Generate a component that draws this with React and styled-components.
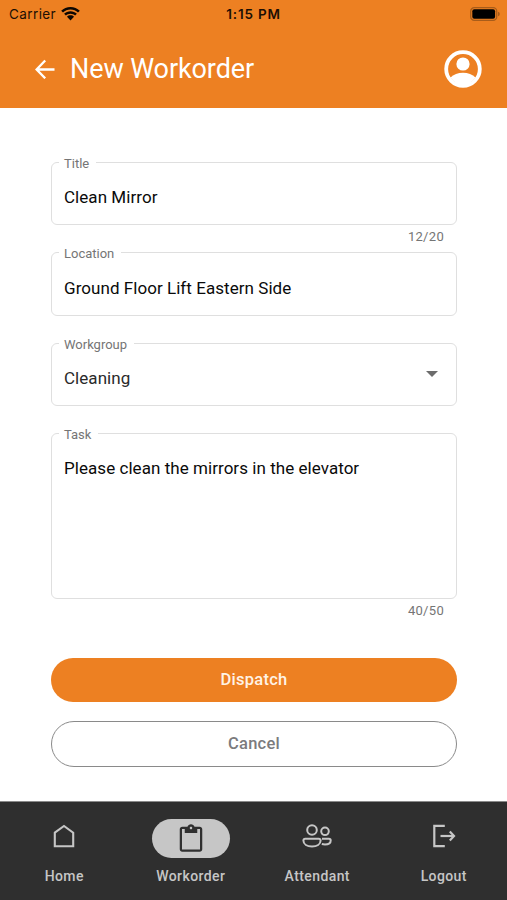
import React from 'react'
import styled, { createGlobalStyle } from 'styled-components'


const GlobalStyle = createGlobalStyle`
  * {
    box-sizing: border-box;
  }

  body {
    margin: 0;
    background: #fff;
    font-family: Roboto, "Liberation Sans", sans-serif;
  }
`

const Screen = styled.div`
  display: flex;
  flex-direction: column;
  width: 507px;
  height: 900px;
  overflow: hidden;
  background: #fff;
`

const Header = styled.header`
  height: 108px;
  background: #ed8022;
`

const StatusBar = styled.div`
  display: grid;
  grid-template-columns: 1fr auto 1fr;
  align-items: center;
  height: 28px;
  padding: 0 7px 0 9px;
  color: #1c0f04;
  font-family: Inter, sans-serif;
  font-size: 13.5px;
`

const Carrier = styled.div`
  display: flex;
  align-items: center;
  gap: 5px;
  letter-spacing: 0.4px;
`

const Time = styled.div`
  margin-right: 2px;
  font-size: 13.5px;
  font-weight: 600;
  letter-spacing: 0.8px;
`

const Battery = styled.div`
  display: flex;
  justify-content: flex-end;
  padding-bottom: 1px;
`

const AppBar = styled.div`
  display: flex;
  align-items: center;
  height: 80px;
  padding: 2px 25px 0 35px;
`

const PageTitle = styled.h1`
  flex: 1;
  margin: 0 0 0 14px;
  color: #fff;
  font-size: 27px;
  font-weight: 400;
  line-height: 32px;
  letter-spacing: -0.1px;
`

const IconButton = styled.button`
  display: flex;
  padding: 0;
  border: 0;
  background: none;
  color: #fff;
  cursor: pointer;
`

const Form = styled.form`
  flex: 1;
  display: flex;
  flex-direction: column;
  padding: 54px 50px 0 51px;
`

const Field = styled.div`
  position: relative;
  display: flex;
  justify-content: space-between;
  height: ${props => props.$height || 63}px;
  margin-bottom: ${props => props.$gap || 0}px;
  padding: ${props => props.$top || 22}px 18px 0 12px;
  border: 1px solid #dfdfdf;
  border-radius: 6px;
`

const Label = styled.label`
  position: absolute;
  top: -7px;
  left: 7px;
  padding: 0 7px 0 5px;
  background: #fff;
  color: #757575;
  font-size: 13px;
  line-height: 16px;
`

const Value = styled.div`
  color: ${props => props.$color || '#0a0a0a'};
  font-size: 17px;
  line-height: 24px;
  letter-spacing: 0.05px;
`

const Counter = styled.div`
  height: ${props => props.$height}px;
  padding: 4px 13px 0 0;
  color: #757575;
  font-size: 13px;
  line-height: 16px;
  letter-spacing: 0.3px;
  text-align: right;
`

const Button = styled.button`
  flex: none;
  height: ${props => (props.$outlined ? 46 : 44)}px;
  margin-bottom: 19px;
  padding: 0 0 1px;
  border: ${props => (props.$outlined ? '1px solid #8a8a8a' : '0')};
  border-radius: 23px;
  background: ${props => (props.$outlined ? '#fff' : '#ed8022')};
  color: ${props => (props.$outlined ? '#7b7b7d' : '#fff3e6')};
  font-family: inherit;
  font-size: 16.5px;
  font-weight: 500;
  letter-spacing: 0.25px;
  cursor: pointer;
`

const TabBar = styled.nav`
  display: grid;
  grid-template-columns: repeat(4, 1fr);
  height: 99px;
  padding: 17px 0 0 1px;
  border-top: 1px solid #8a8a8a;
  background: #2f2f2f;
`

const Tab = styled.a`
  display: flex;
  flex-direction: column;
  align-items: center;
  color: #c6c6c6;
`

const Pill = styled.div`
  display: flex;
  align-items: center;
  justify-content: center;
  width: 78px;
  height: 39px;
  padding-bottom: ${props => (props.$active ? 1 : 5)}px;
  border-radius: 20px;
  background: ${props => (props.$active ? '#c6c6c6' : 'transparent')};
  color: ${props => (props.$active ? '#2f2f2f' : '#c6c6c6')};
`

const TabLabel = styled.span`
  margin-top: 10px;
  font-size: 14px;
  font-weight: 500;
  line-height: 16px;
  letter-spacing: 0.4px;
`


const WifiIcon = () => (
  <svg width="19" height="14" viewBox="0 0 19 14" fill="#0d0702">
    <path d="M9.5 0C5.9 0 2.6 1.4 .2 3.7L2 5.6C4 3.7 6.6 2.6 9.5 2.6S15 3.7 17 5.6L18.8 3.7C16.4 1.4 13.1 0 9.5 0Z" />
    <path d="M9.5 4.2C7 4.2 4.8 5.1 3.1 6.7L4.9 8.6C6.1 7.4 7.7 6.7 9.5 6.7S12.9 7.4 14.1 8.6L15.9 6.7C14.2 5.1 12 4.2 9.5 4.2Z" />
    <path d="M9.5 8.3C8.1 8.3 6.9 8.8 6 9.7L9.5 13.4L13 9.7C12.1 8.8 10.9 8.3 9.5 8.3Z" />
  </svg>
)

const BatteryIcon = () => (
  <svg width="31" height="14" viewBox="0 0 31 14">
    <rect x="1.7" y="0.7" width="26" height="12.6" rx="3.6" fill="none" stroke="#a85c1a" strokeWidth="1.3" />
    <rect x="3.3" y="2.3" width="22.8" height="9.4" rx="2" fill="#000" />
    <path d="M29 4.7Q30.8 5.2 30.8 7T29 9.3Z" fill="#a85c1a" />
  </svg>
)

const BackIcon = () => (
  <svg width="21" height="20" viewBox="0 0 21 20" fill="none" stroke="currentColor" strokeWidth="2.3">
    <path d="M19.5 10.5H2M10.2 1.5L1.6 10.5L10.2 19.3" />
  </svg>
)

const AccountIcon = () => (
  <svg width="38" height="38" viewBox="0 0 38 38" fill="currentColor">
    <circle cx="19" cy="19" r="16.8" fill="none" stroke="currentColor" strokeWidth="3.8" />
    <circle cx="19" cy="14" r="6.6" />
    <path d="M6.5 27.5C9.5 24.4 14 22.8 19 22.8S28.5 24.4 31.5 27.5C28.5 32 24 35 19 35S9.5 32 6.5 27.5Z" />
  </svg>
)

const HomeIcon = () => (
  <svg width="22" height="24" viewBox="0 0 22 24" fill="none" stroke="currentColor" strokeWidth="2.1">
    <path d="M1.8 8.7L11 2L20.2 8.7V22.2H1.8Z" />
  </svg>
)

const WorkorderIcon = () => (
  <svg width="30" height="30" viewBox="0 -1 24 24" fill="currentColor">
    <path d="M19 2h-4.18C14.4.84 13.3 0 12 0c-1.3 0-2.4.84-2.82 2H5c-1.1 0-2 .9-2 2v16c0 1.1.9 2 2 2h14c1.1 0 2-.9 2-2V4c0-1.1-.9-2-2-2zm-7 0c.55 0 1 .45 1 1s-.45 1-1 1-1-.45-1-1 .45-1 1-1zm7.2 18.2H4.800V3.800H7v3.200h10V3.800h2.200v16.400z" />
  </svg>
)

const AttendantIcon = () => (
  <svg width="30" height="24" viewBox="0 0 30 24" fill="none" stroke="currentColor" strokeWidth="2">
    <circle cx="10" cy="6" r="4.8" />
    <circle cx="23" cy="7.3" r="3.8" />
    <path d="M3.3 14.7H16.7Q18.6 14.7 18.6 16.6C18.6 20.3 14.8 22.6 10 22.6S1.4 20.3 1.4 16.6Q1.4 14.7 3.3 14.7Z" />
    <path d="M20 14.7H26.9Q28.7 14.7 28.7 16.4C28.7 19 26.3 20.4 23 20.4Q21.2 20.4 19.8 20" />
  </svg>
)

const LogoutIcon = () => (
  <svg width="24" height="24" viewBox="0 0 24 24" fill="none" stroke="currentColor" strokeWidth="2.2">
    <path d="M12.8 1.8H2.3V22.2H12.8" />
    <path d="M8.5 12H21.5" />
    <path d="M17.8 7.6L22 12L17.8 16.4" />
  </svg>
)

const Caret = styled.span`
  width: 0;
  height: 0;
  margin: 5px 0 0;
  border: 6px solid transparent;
  border-top-color: #6c6c6c;
  border-bottom: 0;
`

const tabs = [
  { name: 'Home', icon: <HomeIcon /> },
  { name: 'Workorder', icon: <WorkorderIcon />, active: true },
  { name: 'Attendant', icon: <AttendantIcon /> },
  { name: 'Logout', icon: <LogoutIcon /> },
]

const App = () => {
  return (
    <Screen>
      <GlobalStyle />
      <Header>
        <StatusBar>
          <Carrier>Carrier <WifiIcon /></Carrier>
          <Time>1:15 PM</Time>
          <Battery><BatteryIcon /></Battery>
        </StatusBar>
        <AppBar>
          <IconButton aria-label="Back"><BackIcon /></IconButton>
          <PageTitle>New Workorder</PageTitle>
          <IconButton aria-label="Account"><AccountIcon /></IconButton>
        </AppBar>
      </Header>

      <Form>
        <Field>
          <Label>Title</Label>
          <Value>Clean Mirror</Value>
        </Field>
        <Counter $height={27}>12/20</Counter>
        <Field $height={64} $gap={27} $top={23}>
          <Label>Location</Label>
          <Value>Ground Floor Lift Eastern Side</Value>
        </Field>
        <Field $gap={27}>
          <Label>Workgroup</Label>
          <Value $color="#2a2a2a">Cleaning</Value>
          <Caret />
        </Field>
        <Field $height={166}>
          <Label>Task</Label>
          <Value>Please clean the mirrors in the elevator</Value>
        </Field>
        <Counter $height={59}>40/50</Counter>
        <Button type="button">Dispatch</Button>
        <Button type="button" $outlined>Cancel</Button>
      </Form>

      <TabBar>
        {tabs.map(tab => (
          <Tab key={tab.name}>
            <Pill $active={tab.active}>{tab.icon}</Pill>
            <TabLabel>{tab.name}</TabLabel>
          </Tab>
        ))}
      </TabBar>
    </Screen>
  )
}

export default App
